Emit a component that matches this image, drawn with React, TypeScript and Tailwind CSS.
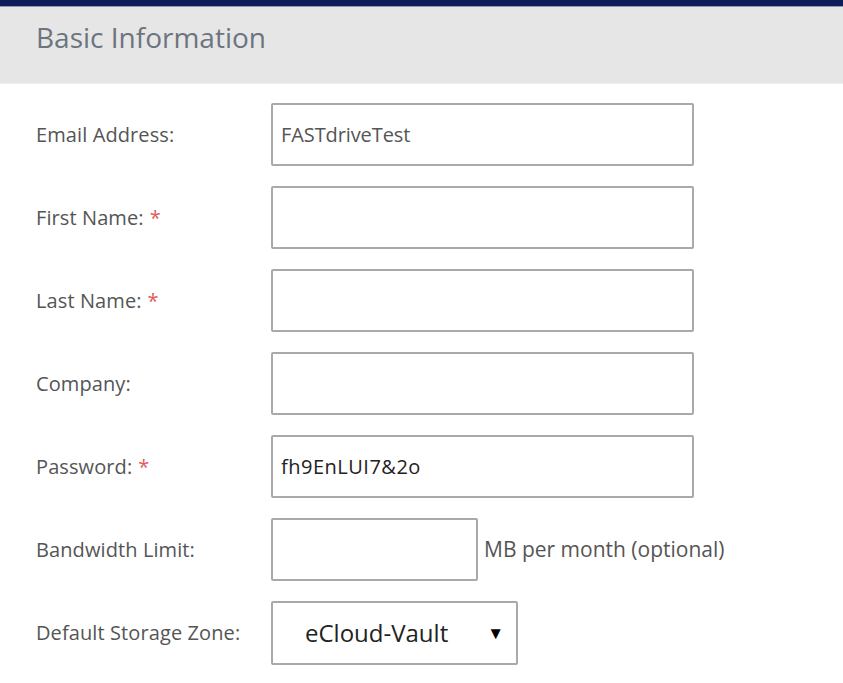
import React from "react";

const font = { fontFamily: '"Open Sans", "Noto Sans", sans-serif' };

function Label({ text, req }: { text: string; req?: boolean }) {
  return (
    <div className="w-[235px] shrink-0 text-[20px] text-[#555] tracking-[0.1px]">
      {text}
      {req && <span className="text-[#e05a5a] ml-[6px]">*</span>}
    </div>
  );
}

function Box({ value, dark, w = "w-[423px]" }: { value?: string; dark?: boolean; w?: string }) {
  return (
    <div
      className={`${w} h-[63px] border-2 border-[#a9a9a9] rounded-[2px] flex items-center pl-[8px] text-[20px] ${
        dark ? "text-[#222] tracking-[0.5px]" : "text-[#555] tracking-[-0.1px]"
      }`}
    >
      {value}
    </div>
  );
}

export default function App() {
  const rows: { label: string; req?: boolean; value?: string; dark?: boolean }[] = [
    { label: "Email Address:", value: "FASTdriveTest" },
    { label: "First Name:", req: true },
    { label: "Last Name:", req: true },
    { label: "Company:" },
    { label: "Password:", req: true, value: "fh9EnLUI7&2o", dark: true },
  ];
  return (
    <div className="w-[843px] h-[683px] bg-white overflow-hidden" style={font}>
      <div className="h-[6px] bg-[#0b1f5a]" />
      <div className="h-[1px] bg-[#8f9ab8]" />
      <div className="h-[77px] bg-[#e6e6e6] pl-[36px] pt-[9px] text-[28px] text-[#6c7480] border-b border-[#ededed]">
        Basic Information
      </div>
      <div className="pl-[36px] pt-[19px] flex flex-col gap-[20px]">
        {rows.map((r) => (
          <div key={r.label} className="flex items-center">
            <Label text={r.label} req={r.req} />
            <Box value={r.value} dark={r.dark} />
          </div>
        ))}
        <div className="flex items-center">
          <Label text="Bandwidth Limit:" />
          <Box w="w-[207px]" />
          <div className="ml-[6px] text-[21px] text-[#555]">MB per month (optional)</div>
        </div>
        <div className="flex items-center">
          <Label text="Default Storage Zone:" />
          <div className="w-[247px] h-[64px] border-2 border-[#a9a9a9] rounded-[2px] flex items-center pl-[32px] pr-[12px] text-[24px] text-[#222]">
            <span className="flex-1">eCloud-Vault</span>
            <span className="text-[17px] text-black">▼</span>
          </div>
        </div>
      </div>
    </div>
  );
}
